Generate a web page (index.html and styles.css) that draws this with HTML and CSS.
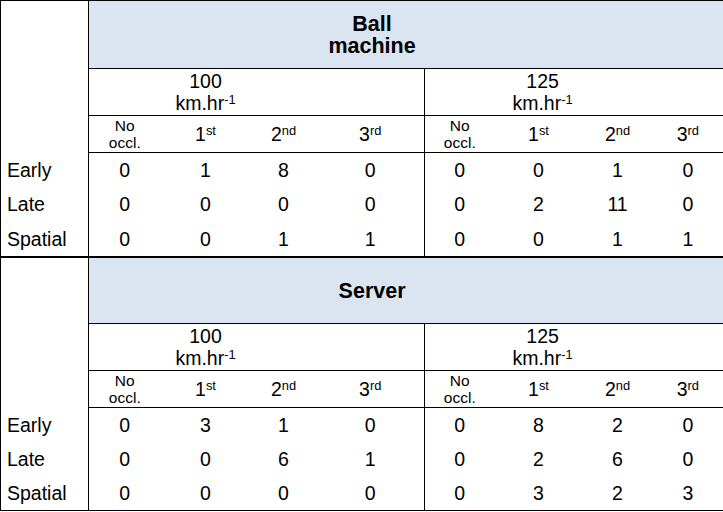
FILE: index.html
```html
<!DOCTYPE html>
<html>
<head>
<meta charset="utf-8">
<link rel="stylesheet" href="styles.css">
</head>
<body>
<table class="grid">
  <colgroup>
    <col class="c-label"><col class="c1"><col class="c2"><col class="c3"><col class="c4">
    <col class="c5"><col class="c6"><col class="c7"><col class="c8">
  </colgroup>
  <tbody class="section">
    <tr class="r-title">
      <td class="corner" rowspan="3"></td>
      <th class="title" colspan="8">Ball<br>machine</th>
    </tr>
    <tr class="r-speed">
      <td class="speed s100" colspan="4">100<br>km.hr<sup>-1</sup></td>
      <td class="speed s125 gsep" colspan="4">125<br>km.hr<sup>-1</sup></td>
    </tr>
    <tr class="r-occl">
      <td class="occl small">No<br>occl.</td><td class="occl">1<sup>st</sup></td><td class="occl">2<sup>nd</sup></td><td class="occl">3<sup>rd</sup></td>
      <td class="occl small gsep">No<br>occl.</td><td class="occl">1<sup>st</sup></td><td class="occl">2<sup>nd</sup></td><td class="occl">3<sup>rd</sup></td>
    </tr>
    <tr class="r-data">
      <td class="label">Early</td><td>0</td><td>1</td><td>8</td><td>0</td><td class="gsep">0</td><td>0</td><td>1</td><td>0</td>
    </tr>
    <tr class="r-data">
      <td class="label">Late</td><td>0</td><td>0</td><td>0</td><td>0</td><td class="gsep">0</td><td>2</td><td>11</td><td>0</td>
    </tr>
    <tr class="r-data r-last">
      <td class="label">Spatial</td><td>0</td><td>0</td><td>1</td><td>1</td><td class="gsep">0</td><td>0</td><td>1</td><td>1</td>
    </tr>
  </tbody>
  <tbody class="section section-second">
    <tr class="r-title r-title2">
      <td class="corner" rowspan="3"></td>
      <th class="title" colspan="8">Server</th>
    </tr>
    <tr class="r-speed">
      <td class="speed s100" colspan="4">100<br>km.hr<sup>-1</sup></td>
      <td class="speed s125 gsep" colspan="4">125<br>km.hr<sup>-1</sup></td>
    </tr>
    <tr class="r-occl">
      <td class="occl small">No<br>occl.</td><td class="occl">1<sup>st</sup></td><td class="occl">2<sup>nd</sup></td><td class="occl">3<sup>rd</sup></td>
      <td class="occl small gsep">No<br>occl.</td><td class="occl">1<sup>st</sup></td><td class="occl">2<sup>nd</sup></td><td class="occl">3<sup>rd</sup></td>
    </tr>
    <tr class="r-data">
      <td class="label">Early</td><td>0</td><td>3</td><td>1</td><td>0</td><td class="gsep">0</td><td>8</td><td>2</td><td>0</td>
    </tr>
    <tr class="r-data">
      <td class="label">Late</td><td>0</td><td>0</td><td>6</td><td>1</td><td class="gsep">0</td><td>2</td><td>6</td><td>0</td>
    </tr>
    <tr class="r-data r-last2">
      <td class="label">Spatial</td><td>0</td><td>0</td><td>0</td><td>0</td><td class="gsep">0</td><td>3</td><td>2</td><td>3</td>
    </tr>
  </tbody>
</table>
</body>
</html>
```
FILE: styles.css
```css
html, body {
  margin: 0;
  padding: 0;
  background: #ffffff;
}
body {
  font-family: "Liberation Sans", Arial, sans-serif;
  color: #000000;
}
.grid {
  border-collapse: collapse;
  table-layout: fixed;
  width: 723px;
  border: 1px solid #000;
  font-size: 19.5px;
}
.c-label { width: 88px; }
.c1 { width: 72px; }
.c2 { width: 90px; }
.c3 { width: 66px; }
.c4 { width: 108px; }
.c5 { width: 70px; }
.c6 { width: 88px; }
.c7 { width: 70px; }
.c8 { width: 71px; }

.grid td, .grid th {
  padding: 0;
  text-align: center;
  vertical-align: middle;
  line-height: 22px;
}
.corner {
  border-right: 1px solid #000;
}
.title {
  background: #dbe5f1;
  font-weight: bold;
  font-size: 21.5px;
  line-height: 24.5px;
  padding-right: 68px !important;
  border-bottom: 1px solid #000;
}
.r-title td, .r-title th { height: 67px; }
.r-title2 td, .r-title2 th { height: 65px; }
.section-second .r-title2 td, .section-second .r-title2 th {
  border-top: 2px solid #000;
}
.speed {
  border-bottom: 1px solid #000;
  line-height: 21px;
}
.s100 { padding-right: 102px !important; }
.s125 { padding-right: 63px !important; }
.r-speed td { height: 46px; }
.occl {
  border-bottom: 1px solid #000;
}
.occl.small {
  font-size: 15.5px;
  line-height: 17.5px;
}
.r-occl td { height: 36px; }
.r-data td { height: 34px; }
.r-last td { height: 35px; }
.r-last2 td { height: 34px; }
.label {
  text-align: left !important;
  padding-left: 6px !important;
  border-right: 1px solid #000;
}
.gsep {
  border-left: 1px solid #000;
}
sup {
  font-size: 0.66em;
  line-height: 0;
  vertical-align: 0.5em;
}
```
